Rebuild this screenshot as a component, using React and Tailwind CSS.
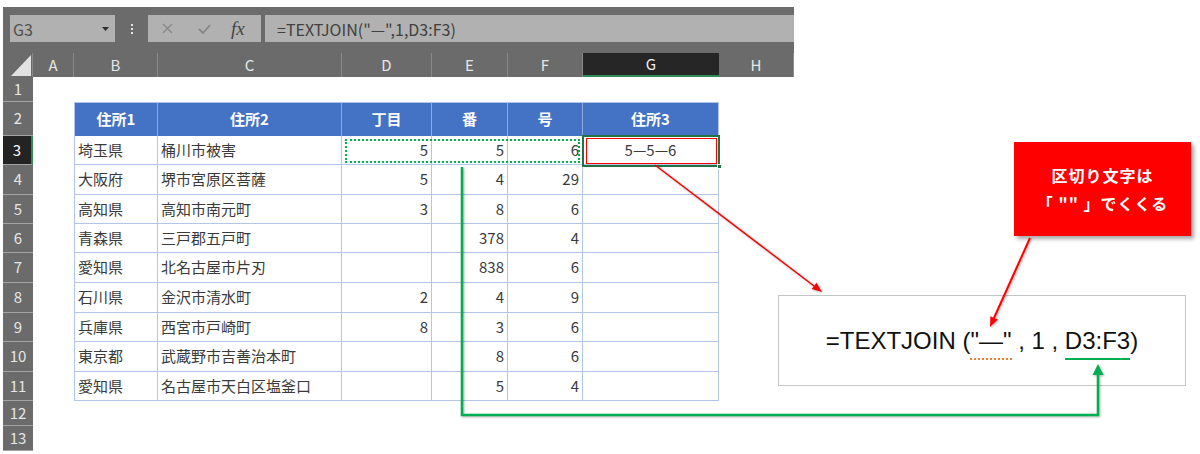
import React from 'react';

const letters = ['A', 'B', 'C', 'D', 'E', 'F', 'G', 'H'];
const heads = ['住所1', '住所2', '丁目', '番', '号', '住所3'];

const rows = [
  ['埼玉県', '桶川市被害', 5, 5, 6, '5—5—6'],
  ['大阪府', '堺市宮原区菩薩', 5, 4, 29, ''],
  ['高知県', '高知市南元町', 3, 8, 6, ''],
  ['青森県', '三戸郡五戸町', '', 378, 4, ''],
  ['愛知県', '北名古屋市片刃', '', 838, 6, ''],
  ['石川県', '金沢市清水町', 2, 4, 9, ''],
  ['兵庫県', '西宮市戸崎町', 8, 3, 6, ''],
  ['東京都', '武蔵野市吉善治本町', '', 8, 6, ''],
  ['愛知県', '名古屋市天白区塩釜口', '', 5, 4, ''],
];

const RowHead = ({ n, active }) => (
  <div
    className={
      active
        ? 'bg-[#232323] text-white border-r-2 border-r-[#2e8b57] border-b border-b-[#a3a3a3] flex items-center justify-center'
        : 'bg-[#6b6b6b] text-[#e6e6e6] border-b border-[#a3a3a3] flex items-center justify-center'
    }
  >
    {n}
  </div>
);

const FormulaBar = () => (
  <div className="h-[46px] bg-[#6b6b6b] flex items-start pt-[8px] pl-[7px]">
    {/* name box */}
    <div className="w-[105px] h-[27px] bg-[#b1b1b1] flex items-center justify-between pl-[3px] pr-[6px] text-[16px] text-[#505050]">
      <span>G3</span>
      <svg width="7" height="4" viewBox="0 0 7 4">
        <path d="M0 0h7L3.5 4z" fill="#2e2e2e" />
      </svg>
    </div>
    <div className="w-[33px] h-[27px] flex flex-col items-center justify-center gap-[2px]">
      <span className="w-[2px] h-[2px] bg-[#e5e5e5]" />
      <span className="w-[2px] h-[2px] bg-[#e5e5e5]" />
      <span className="w-[2px] h-[2px] bg-[#e5e5e5]" />
    </div>
    {/* cancel / enter / fx */}
    <div className="w-[113px] h-[27px] bg-[#b1b1b1] flex items-center">
      <svg className="ml-[14px]" width="11" height="11" viewBox="0 0 11 11">
        <path d="M1 1l9 9M10 1l-9 9" stroke="#878787" strokeWidth="1.3" />
      </svg>
      <svg className="ml-[25px]" width="13" height="10" viewBox="0 0 13 10">
        <path d="M1 5l4 4 7-8" stroke="#878787" strokeWidth="1.8" fill="none" />
      </svg>
      <span className="ml-[20px] italic text-[19px] leading-none text-[#454545] font-['Liberation_Serif',serif]">fx</span>
    </div>
    <div className="ml-[4px] flex-1 h-[27px] bg-[#b1b1b1] flex items-center pl-[12px] text-[16px] text-[#404040]">
      =TEXTJOIN("—",1,D3:F3)
    </div>
  </div>
);

const Sheet = () => (
  <div className="grid grid-cols-[30px_41px_84px_184px_90px_76px_75px_136px_75px] grid-rows-[24px_25px_34px_29px_30px_29px_29px_30px_30px_29px_30px_29px_25px_25px] text-[15px]">
    {/* column headers */}
    <div className="bg-[#6b6b6b] border-r border-[#8a8a8a]">
      <svg width="30" height="24" viewBox="0 0 30 24">
        <path d="M28 2V23H8z" fill="#e2e2e2" />
      </svg>
    </div>
    {letters.map((l) => (
      <div
        key={l}
        className={
          l === 'G'
            ? 'bg-[#262626] text-[#f2f2f2] border-b-2 border-[#2e8b57] flex items-center justify-center'
            : 'bg-[#6b6b6b] text-[#e6e6e6] border-r border-[#8a8a8a] flex items-center justify-center'
        }
      >
        {l}
      </div>
    ))}

    {/* row 1 */}
    <RowHead n={1} />
    {letters.map((l) => (
      <div key={'r1' + l} />
    ))}

    {/* row 2 : table header */}
    <RowHead n={2} />
    <div />
    {heads.map((h, i) => (
      <div
        key={h}
        className={
          'bg-[#4472c4] text-white font-bold flex items-center justify-center border-t border-t-[#b4c6e7] border-r border-r-[#8eaadb]' +
          (i === 0 ? ' border-l border-l-[#b4c6e7]' : '') +
          (i === 5 ? ' border-r-[#b4c6e7]' : '')
        }
      >
        {h}
      </div>
    ))}
    <div />

    {/* rows 3 - 11 */}
    {rows.map((r, i) => (
      <React.Fragment key={'row' + i}>
        <RowHead n={i + 3} active={i === 0} />
        <div />
        <div className="border-l border-r border-b border-[#b4c6e7] flex items-center pl-[3px] text-[#3a3a3a]">{r[0]}</div>
        <div className="border-r border-b border-[#b4c6e7] flex items-center pl-[3px] text-[#3a3a3a]">{r[1]}</div>
        <div className="border-r border-b border-[#b4c6e7] flex items-center justify-end pr-[3px] text-[#3a3a3a]">{r[2]}</div>
        <div className="border-r border-b border-[#b4c6e7] flex items-center justify-end pr-[3px] text-[#3a3a3a]">{r[3]}</div>
        <div className="border-r border-b border-[#b4c6e7] flex items-center justify-end pr-[3px] text-[#3a3a3a]">{r[4]}</div>
        <div className="border-r border-b border-[#b4c6e7] flex items-center justify-center text-[#3a3a3a]">{r[5]}</div>
        <div />
      </React.Fragment>
    ))}

    {/* rows 12 - 13 */}
    {[12, 13].map((n) => (
      <React.Fragment key={'row' + n}>
        <RowHead n={n} />
        {letters.map((l) => (
          <div key={n + l} />
        ))}
      </React.Fragment>
    ))}
  </div>
);

export default function App() {
  return (
    <div className="relative w-[1200px] h-[454px] overflow-hidden bg-white font-['Noto_Sans_CJK_JP','Noto_Sans',sans-serif]">
      <div className="mt-[7px] ml-[3px] w-[791px]">
        <FormulaBar />
        <Sheet />
      </div>

      {/* copy marquee around D3:F3 */}
      <div className="absolute left-[345px] top-[139px] w-[235px] h-[24px] border-2 border-dotted border-[#00b050]" />

      {/* active cell G3 */}
      <div className="absolute left-[582px] top-[135px] w-[138px] h-[32px] border-2 border-[#217346]" />
      <div className="absolute left-[586px] top-[138px] w-[131px] h-[26px] border-[1.5px] border-[#ff0000]" />
      <div className="absolute left-[717px] top-[164px] w-[5px] h-[5px] bg-[#217346] border border-white" />

      {/* callout */}
      <div className="absolute left-[1014px] top-[142px] w-[177px] h-[94px] bg-[#ff0000] shadow-[3px_3px_4px_rgba(0,0,0,0.35)] flex flex-col items-center justify-center text-white font-bold text-[16px] leading-[28px] tracking-[1px]">
        <span>区切り文字は</span>
        <span className="whitespace-pre">「 "" 」でくくる</span>
      </div>

      {/* formula box */}
      <div className="absolute left-[778px] top-[295px] w-[408px] h-[91px] border-[1.5px] border-[#c4c4c4] bg-white flex items-center justify-center">
        <span className="font-['Liberation_Sans',Arial,sans-serif] text-[24px] leading-none text-[#111] whitespace-pre">
          =TEXTJOIN (
          <span className="pb-[4px] border-b-2 border-dotted border-[#ed7d31]">"—"</span>
          {' , 1 , '}
          <span className="pb-[4px] border-b-2 border-[#00b050]">D3:F3</span>)
        </span>
      </div>

      {/* arrows */}
      <svg className="absolute left-0 top-0 pointer-events-none" width="1200" height="454" viewBox="0 0 1200 454">
        <g className="drop-shadow-[1px_1px_1px_rgba(0,0,0,0.3)]">
          <path d="M462 167V415H1098V374" stroke="#00b050" strokeWidth="2.5" fill="none" />
          <path d="M1098 364L1092.5 375H1103.5z" fill="#00b050" />
          <path d="M655 165L814 286" stroke="#ff0000" strokeWidth="1.5" fill="none" />
          <path d="M822 292L811.6 289.1L816.5 282.8z" fill="#ff0000" />
          <path d="M1030 238L994 318" stroke="#ff0000" strokeWidth="2" fill="none" />
          <path d="M990 327L990.4 316.2L997.8 319.5z" fill="#ff0000" />
        </g>
      </svg>
    </div>
  );
}
